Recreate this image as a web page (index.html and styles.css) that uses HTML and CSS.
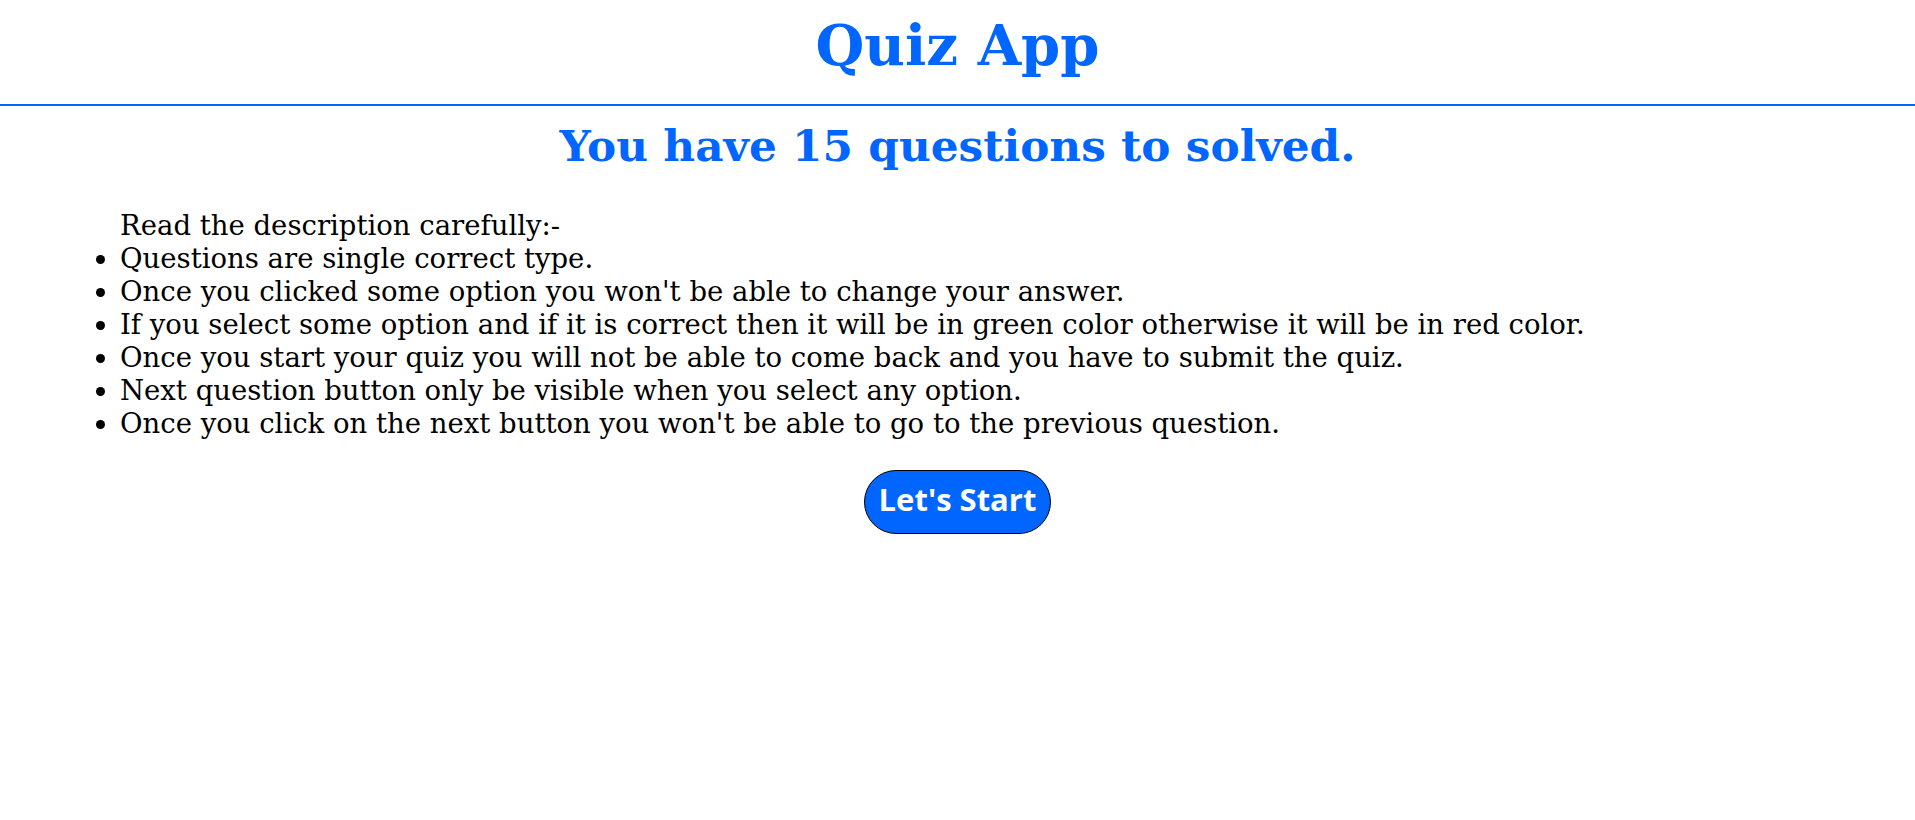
FILE: index.html
```html
<!DOCTYPE html>
<html>
<head>
<meta charset="utf-8">
<link rel="stylesheet" href="styles.css">
</head>
<body>
<header class="top">
  <h1 class="title">Quiz App</h1>
</header>
<main class="content">
  <h2 class="subtitle">You have 15 questions to solved.</h2>
  <div class="rules">
    <p class="rules-head">Read the description carefully:-</p>
    <ul class="rules-list">
      <li>Questions are single correct type.</li>
      <li>Once you clicked some option you won't be able to change your answer.</li>
      <li>If you select some option and if it is correct then it will be in green color otherwise it will be in red color.</li>
      <li>Once you start your quiz you will not be able to come back and you have to submit the quiz.</li>
      <li>Next question button only be visible when you select any option.</li>
      <li>Once you click on the next button you won't be able to go to the previous question.</li>
    </ul>
  </div>
  <div class="actions">
    <button class="start-btn">Let's Start</button>
  </div>
</main>
</body>
</html>
```
FILE: styles.css
```css
html, body {
  margin: 0;
  padding: 0;
  background: #fff;
}
body {
  font-family: "DejaVu Serif", serif;
  color: #000;
}
.top {
  border-bottom: 2px solid #0066ff;
  height: 104px;
  display: flex;
  align-items: flex-start;
  justify-content: center;
}
.title {
  margin: 12px 0 0;
  font-size: 56px;
  font-weight: bold;
  color: #0066ff;
  line-height: 1.2;
}
.subtitle {
  margin: 14px 0 0;
  text-align: center;
  font-size: 43.8px;
  font-weight: bold;
  color: #0066ff;
  line-height: 1.2;
}
.rules {
  margin: 36px 0 0 120px;
  font-size: 27.5px;
  line-height: 33px;
}
.rules-head {
  margin: 0;
}
.rules-list {
  margin: 0;
  padding: 0;
}
.actions {
  display: flex;
  justify-content: center;
  margin-top: 30px;
}
.start-btn {
  font-family: "Open Sans", sans-serif;
  font-weight: 700;
  font-size: 31px;
  color: #fff;
  background: #0066ff;
  border: 1px solid #000;
  border-radius: 40px;
  width: 187px;
  height: 64px;
  padding: 0 0 5px;
}
```
